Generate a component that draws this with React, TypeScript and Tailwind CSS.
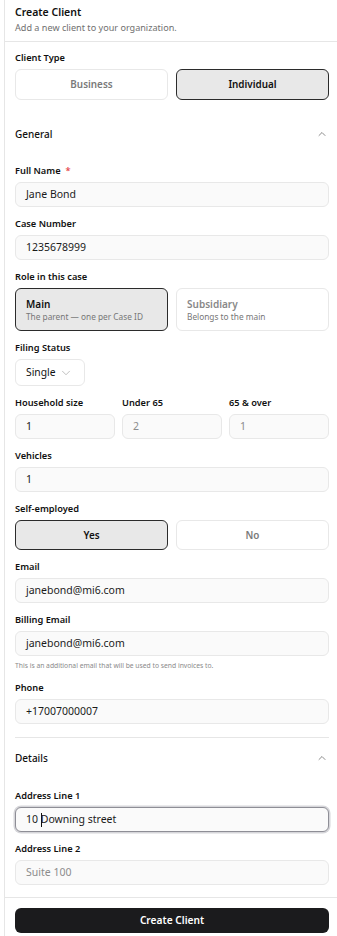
import { ChevronDown, ChevronUp } from 'lucide-react';

const inputCls =
  'flex h-[25px] w-full items-center rounded-md border border-[#e8e8e8] bg-[#fafafa] px-[10px] text-[10.5px] text-[#1a1a1a]';

function Label({ children, req }: { children: React.ReactNode; req?: boolean }) {
  return (
    <div className="mb-[4px] h-[14px] text-[9.25px] font-semibold leading-[14px] text-[#111]">
      {children}
      {req && <span className="ml-[5px] text-[#e5484d]">*</span>}
    </div>
  );
}

function Field({ label, value, req, muted }: { label: string; value: string; req?: boolean; muted?: boolean }) {
  return (
    <div>
      <Label req={req}>{label}</Label>
      <div className={inputCls + (muted ? ' text-[#8c8c8c]' : '')}>{value}</div>
    </div>
  );
}

function Toggle({ left, right, active, h }: { left: string; right: string; active: 'left' | 'right'; h: string }) {
  const on = 'border-[#2b2b2b] bg-[#e8e8e8] text-[#111]';
  const off = 'border-[#e8e8e8] bg-white text-[#7a7a7a]';
  return (
    <div className={'grid grid-cols-2 gap-[8px] ' + h}>
      <div className={'flex items-center justify-center rounded-md border text-[9.9px] font-semibold ' + (active === 'left' ? on : off)}>
        {left}
      </div>
      <div className={'flex items-center justify-center rounded-md border text-[9.9px] font-semibold ' + (active === 'right' ? on : off)}>
        {right}
      </div>
    </div>
  );
}

function Section({ title }: { title: string }) {
  return (
    <div className="flex h-[16px] items-center justify-between">
      <span className="text-[10px] font-medium text-[#111]">{title}</span>
      <ChevronUp size={12} strokeWidth={1.5} className="mr-[1px] text-[#666]" />
    </div>
  );
}

export default function App() {
  return (
    <div
      className="h-[936px] w-[337px] overflow-hidden bg-white pl-[4px]"
      style={{ fontFamily: '"Noto Sans", "Open Sans", sans-serif' }}
    >
      <div className="flex h-full flex-col border-l border-[#e6e6e6]">
        <div className="border-b border-[#e6e6e6] pb-[7px] pl-[10px] pt-[4px]">
          <div className="text-[10.5px] font-semibold leading-[17px] text-[#111]">Create Client</div>
          <div className="text-[9.1px] leading-[13px] text-[#707070]">Add a new client to your organization.</div>
        </div>

        <div className="flex flex-col pl-[10px] pr-[8px] pt-[9px]">
          <Label>Client Type</Label>
          <Toggle left="Business" right="Individual" active="right" h="h-[31px]" />

          <div className="mt-[26px]">
            <Section title="General" />
          </div>

          <div className="mt-[22px] flex flex-col gap-[10px]">
            <Field label="Full Name" value="Jane Bond" req />
            <Field label="Case Number" value="1235678999" />

            <div>
              <Label>Role in this case</Label>
              <div className="grid h-[43px] grid-cols-2 gap-[8px]">
                <div className="flex flex-col justify-center rounded-md border border-[#2b2b2b] bg-[#e8e8e8] px-[10px]">
                  <div className="text-[10px] font-semibold leading-[14px] text-[#111]">Main</div>
                  <div className="text-[8.3px] leading-[11px] text-[#777]">The parent — one per Case ID</div>
                </div>
                <div className="flex flex-col justify-center rounded-md border border-[#e8e8e8] bg-white px-[10px]">
                  <div className="text-[10px] font-semibold leading-[14px] text-[#888]">Subsidiary</div>
                  <div className="text-[8.3px] leading-[11px] text-[#777]">Belongs to the main</div>
                </div>
              </div>
            </div>

            <div>
              <Label>Filing Status</Label>
              <div className="flex h-[27px] w-[70px] items-center justify-between rounded-md border border-[#e8e8e8] bg-white pl-[10px] pr-[11px] text-[10.3px] text-[#111]">
                Single
                <ChevronDown size={14} strokeWidth={1.25} className="text-[#aaa]" />
              </div>
            </div>

            <div className="grid grid-cols-3 gap-[7px]">
              <Field label="Household size" value="1" />
              <Field label="Under 65" value="2" muted />
              <Field label="65 & over" value="1" muted />
            </div>

            <Field label="Vehicles" value="1" />

            <div>
              <Label>Self-employed</Label>
              <Toggle left="Yes" right="No" active="left" h="h-[30px]" />
            </div>

            <Field label="Email" value="janebond@mi6.com" />

            <div>
              <Field label="Billing Email" value="janebond@mi6.com" />
              <div className="mt-[5px] text-[6.75px] leading-[10px] text-[#8a8a8a]">
                This is an additional email that will be used to send invoices to.
              </div>
            </div>

            <Field label="Phone" value="+17007000007" />
          </div>

          <div className="mt-[13px] border-t border-[#e6e6e6] pt-[12px]">
            <Section title="Details" />
          </div>

          <div className="mt-[23px] flex flex-col gap-[10px]">
            <div>
              <Label>Address Line 1</Label>
              <div className="flex h-[25px] w-full items-center rounded-md border border-[#8e8e96] bg-[#fafafa] px-[10px] text-[10.5px] text-[#1a1a1a] shadow-[0_0_0_1.5px_#d6d6da]">
                <span className="whitespace-pre">10 </span>
                <span className="-mr-px inline-block h-[14px] w-px bg-[#111]" />
                <span>Downing street</span>
              </div>
            </div>
            <Field label="Address Line 2" value="Suite 100" muted />
          </div>
        </div>

        <div className="mt-[12px] border-t border-[#e6e6e6] pb-[3px] pl-[10px] pr-[8px] pt-[10px]">
          <div className="flex h-[25px] items-center justify-center rounded-md bg-[#1b1b1d] text-[10.2px] font-semibold text-white">
            Create Client
          </div>
        </div>
      </div>
    </div>
  );
}
